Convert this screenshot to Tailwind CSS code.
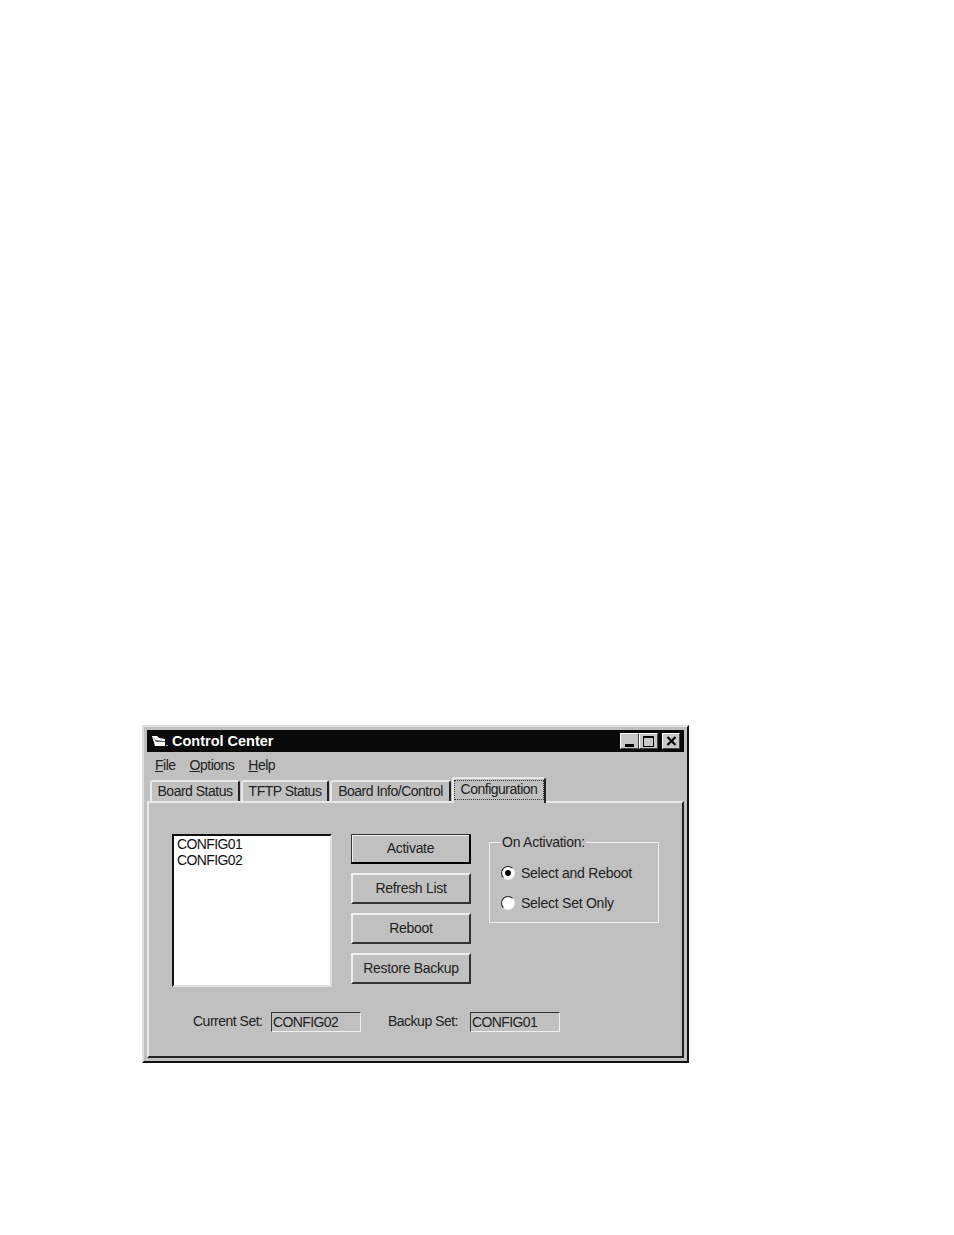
<!DOCTYPE html>
<html lang="en">
  <head>
    <meta charset="UTF-8" />
    <title>Control Center</title>
    <script src="https://cdn.jsdelivr.net/npm/@tailwindcss/browser@4"></script>
  </head>
  <body class="bg-white font-['Liberation_Sans',Arial,sans-serif] text-[14px] tracking-[-0.5px] leading-[16px] text-[#222] pt-[725px] pl-[142px]">
    <!-- window -->
    <div class="w-[547px] h-[338px] bg-[#c0c0c0] border-2 border-t-[#dfdfdf] border-l-[#dfdfdf] border-r-[#111] border-b-[#111] p-[3px] flex flex-col">
      <!-- title bar -->
      <div class="h-[22px] bg-[#0a0a0a] flex items-center pl-[5px] pr-[4px] shrink-0">
        <svg width="16" height="13" viewBox="0 0 16 13" class="mr-[4px]">
          <path d="M0 1 L5 1 L7 3 L13 4 L13 11 L3 11 Z" fill="#fff" />
          <path d="M1 2 L4 5 L13 6 L13 7 L4 7 Z" fill="#666" />
          <rect x="14" y="10" width="2" height="1" fill="#aaa" />
        </svg>
        <span class="text-white font-bold text-[14.5px] tracking-normal">Control Center</span>
        <div class="ml-auto flex">
          <button class="w-[19px] h-[16px] bg-[#c8c8c8] border border-t-white border-l-white border-r-[#444] border-b-[#444] flex items-end justify-center pb-[1px]">
            <span class="block w-[9px] h-[3px] bg-black"></span>
          </button>
          <button class="w-[19px] h-[16px] bg-[#c8c8c8] border border-t-white border-l-white border-r-[#444] border-b-[#444] flex items-center justify-center">
            <span class="block w-[11px] h-[11px] border border-t-2 border-black"></span>
          </button>
          <button class="w-[18px] h-[16px] ml-[4px] bg-[#c8c8c8] border border-t-white border-l-white border-r-[#444] border-b-[#444] flex items-center justify-center">
            <svg width="11" height="10" viewBox="0 0 11 10"><path d="M1.5 1 L9.5 9 M9.5 1 L1.5 9" stroke="#000" stroke-width="2.2" fill="none" /></svg>
          </button>
        </div>
      </div>

      <!-- menu -->
      <div class="h-[25px] flex items-center gap-[14px] pl-[8px] shrink-0">
        <span><u>F</u>ile</span>
        <span><u>O</u>ptions</span>
        <span><u>H</u>elp</span>
      </div>

      <!-- tabs -->
      <div class="h-[24px] flex items-end gap-[1px] pl-[3px] shrink-0 relative z-10">
        <div class="h-[21px] w-[90px] bg-[#c0c0c0] border-t-2 border-l-2 border-r-2 border-t-[#e8e8e8] border-l-[#e8e8e8] border-r-[#222] rounded-t-[3px] text-center pt-[1px] whitespace-nowrap">Board Status</div>
        <div class="h-[21px] w-[88px] bg-[#c0c0c0] border-t-2 border-l-2 border-r-2 border-t-[#e8e8e8] border-l-[#e8e8e8] border-r-[#222] rounded-t-[3px] text-center pt-[1px] whitespace-nowrap">TFTP Status</div>
        <div class="h-[21px] w-[121px] bg-[#c0c0c0] border-t-2 border-l-2 border-r-2 border-t-[#e8e8e8] border-l-[#e8e8e8] border-r-[#222] rounded-t-[3px] text-center pt-[1px] whitespace-nowrap">Board Info/Control</div>
        <div class="h-[26px] -mb-[2px] w-[94px] bg-[#c0c0c0] border-t-2 border-l-2 border-r-2 border-t-[#e8e8e8] border-l-[#e8e8e8] border-r-[#222] rounded-t-[3px] pt-[1px]">
          <div class="h-[20px] border border-dotted border-[#333] text-center leading-[17px] whitespace-nowrap">Configuration</div>
        </div>
      </div>

      <!-- panel -->
      <div class="flex-1 border-2 border-t-[#e8e8e8] border-l-[#e8e8e8] border-r-[#222] border-b-[#222] pt-[31px] pl-[23px] pr-[23px]">
        <div class="flex items-start">
          <!-- list -->
          <div class="w-[160px] h-[153px] bg-white border-2 border-t-[#111] border-l-[#111] border-r-[#dfdfdf] border-b-[#dfdfdf] pl-[3px] shrink-0 text-[#111] tracking-[-0.6px]">
            <div>CONFIG01</div>
            <div>CONFIG02</div>
          </div>

          <!-- buttons -->
          <div class="ml-[19px] w-[120px] flex flex-col gap-[9px] shrink-0 tracking-[-0.3px]">
            <button class="h-[30px] pb-[1px] bg-[#c0c0c0] border border-r-2 border-b-2 border-t-[#333] border-l-[#333] border-r-[#000] border-b-[#000] shadow-[inset_1px_1px_0_#efefef]">Activate</button>
            <button class="h-[31px] pb-[1px] bg-[#c0c0c0] border-2 border-t-[#efefef] border-l-[#efefef] border-r-[#333] border-b-[#333]">Refresh List</button>
            <button class="h-[31px] pb-[1px] bg-[#c0c0c0] border-2 border-t-[#efefef] border-l-[#efefef] border-r-[#333] border-b-[#333]">Reboot</button>
            <button class="h-[31px] pb-[1px] bg-[#c0c0c0] border-2 border-t-[#efefef] border-l-[#efefef] border-r-[#333] border-b-[#333]">Restore Backup</button>
          </div>

          <!-- option group -->
          <fieldset class="ml-[18px] w-[171px] h-[89px] border border-[#f0f0f0] pl-[11px] pt-[10px] tracking-[-0.25px]">
            <legend class="px-[1px] -mb-[2px]">On Activation:</legend>
            <label class="flex items-center gap-[6px] h-[30px]">
              <span class="w-[14px] h-[14px] rounded-full bg-white border border-t-[#222] border-l-[#222] border-r-[#eee] border-b-[#eee] flex items-center justify-center"><span class="block w-[6px] h-[6px] rounded-full bg-black"></span></span>
              Select and Reboot
            </label>
            <label class="flex items-center gap-[6px] h-[30px]">
              <span class="w-[14px] h-[14px] rounded-full bg-white border border-t-[#222] border-l-[#222] border-r-[#eee] border-b-[#eee]"></span>
              Select Set Only
            </label>
          </fieldset>
        </div>

        <!-- current / backup -->
        <div class="flex items-center mt-[25px] pl-[21px]">
          <span class="pb-[3px] w-[78px] whitespace-nowrap">Current Set:</span>
          <div class="w-[90px] h-[20px] border border-t-[#333] border-l-[#333] border-r-[#f0f0f0] border-b-[#f0f0f0] pl-[1px] leading-[19px] tracking-[-0.6px]">CONFIG02</div>
          <span class="ml-[27px] pb-[3px] w-[82px] whitespace-nowrap">Backup Set:</span>
          <div class="w-[90px] h-[20px] border border-t-[#333] border-l-[#333] border-r-[#f0f0f0] border-b-[#f0f0f0] pl-[1px] leading-[19px] tracking-[-0.6px]">CONFIG01</div>
        </div>
      </div>
    </div>
  </body>
</html>
